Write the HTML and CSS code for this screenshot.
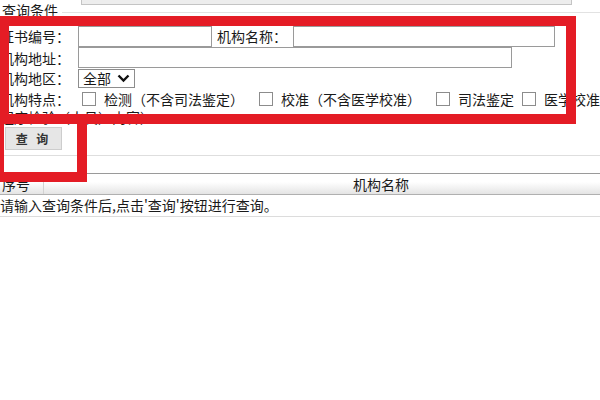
FILE: index.html
```html
<!DOCTYPE html>
<html lang="zh-CN">
<head>
  <meta charset="UTF-8">
  <title>机构查询</title>
  <link rel="stylesheet" href="styles.css">
</head>
<body>
  <div class="page">
    <div class="head">
      <span class="legend">查询条件</span>
      <div class="head-rest">
        <div class="strip"></div>
      </div>
    </div>

    <div class="form">
      <div class="row row-1">
        <label class="lbl">证书编号：</label>
        <input type="text" class="txt txt-code">
        <label class="lbl lbl-2">机构名称：</label>
        <input type="text" class="txt txt-name">
      </div>
      <div class="row row-2">
        <label class="lbl">机构地址：</label>
        <input type="text" class="txt txt-addr">
      </div>
      <div class="row row-3">
        <label class="lbl">机构地区：</label>
        <div class="select">
          <span>全部</span>
          <svg width="13" height="9" viewBox="0 0 13 9"><polyline points="1.5,1.5 6.5,6.5 11.5,1.5" fill="none" stroke="#111" stroke-width="2.4"/></svg>
        </div>
      </div>
      <div class="row row-4">
        <label class="lbl">机构特点：</label>
        <span class="check"><span class="box"></span>检测（不含司法鉴定）</span>
        <span class="check"><span class="box"></span>校准（不含医学校准）</span>
        <span class="check check-short"><span class="box"></span>司法鉴定</span>
        <span class="check"><span class="box"></span>医学校准</span>
      </div>
      <div class="row row-5">
        <span class="more">程序检验（人员）内容）</span>
      </div>
    </div>

    <button class="btn">查 询</button>

    <div class="sep"></div>

    <div class="grid-head">
      <div class="col-no">序号</div>
      <div class="col-name">机构名称</div>
    </div>
    <div class="grid-row">请输入查询条件后,点击'查询'按钮进行查询。</div>

    <!-- annotation marks -->
    <div class="mark mark-form"></div>
    <div class="mark mark-btn"></div>
  </div>
</body>
</html>
```

FILE: styles.css
```css
html, body {
  margin: 0;
  padding: 0;
  overflow: hidden;
  background: #fff;
}

body {
  font-family: "Noto Sans CJK SC", "Liberation Sans", sans-serif;
  font-size: 14px;
  color: #1a1a1a;
}

.page {
  position: relative;
  width: 600px;
  height: 400px;
}

/* legend line */
.head {
  display: flex;
  align-items: flex-start;
  height: 25px;
}

.legend {
  line-height: 18px;
  margin-top: 1px;
  padding-left: 2px;
}

.head-rest {
  flex: 1;
  margin-left: 4px;
  height: 12px;
  border-bottom: 1px solid #e2e2e2;
}

.strip {
  margin-left: 19px;
  width: 489px;
  height: 4px;
  background: #ededed;
  border: 1px solid #c4c4c4;
  border-top: none;
}

/* form */
.row {
  display: flex;
  align-items: center;
  white-space: nowrap;
}

.row-1 { height: 22px; }
.row-2 { height: 21px; }
.row-3 { height: 20px; }
.row-4 { height: 21px; }
.row-5 { height: 16px; align-items: flex-start; }

.lbl {
  width: 78px;
  flex: none;
  line-height: 16px;
}

.lbl-2 {
  width: 76px;
  padding-left: 5px;
}

.txt {
  box-sizing: border-box;
  height: 21px;
  margin: 0;
  padding: 1px 3px;
  border: 1px solid #9a9a9a;
  background: #fff;
  font: inherit;
}

.txt-code { width: 134px; }
.txt-name { width: 262px; }
.txt-addr { width: 434px; }

.select {
  box-sizing: border-box;
  display: flex;
  align-items: center;
  justify-content: space-between;
  width: 57px;
  height: 19px;
  padding: 0 4px 0 4px;
  border: 1px solid #8d8d8d;
  line-height: 17px;
}

.check {
  display: flex;
  align-items: center;
  margin-right: 11px;
}

.check-short {
  margin-right: 4px;
}

.box {
  box-sizing: border-box;
  width: 14px;
  height: 14px;
  margin: 0 8px 0 4px;
  border: 1px solid #8c8c8c;
  background: #fff;
}

.more {
  line-height: 16px;
}

/* button */
.btn {
  display: block;
  box-sizing: border-box;
  width: 57px;
  height: 23px;
  margin: 2px 0 0 5px;
  padding: 0;
  background: #e6e6e6;
  border: 1px solid #cdcdcd;
  font-family: "Noto Sans CJK SC", sans-serif;
  font-size: 12px;
  font-weight: bold;
  letter-spacing: 3px;
  color: #333;
}

.sep {
  margin-top: 5px;
  border-top: 1px solid #dedede;
  height: 17px;
}

/* result grid */
.grid-head {
  display: flex;
  height: 20px;
  border-top: 1px solid #9a9a9a;
  border-bottom: 1px solid #b0b0b0;
  background: linear-gradient(#ffffff, #ffffff 40%, #e4e4e4);
  line-height: 20px;
}

.col-no {
  width: 41px;
  padding-left: 2px;
  border-right: 1px solid #d2d2d2;
}

.col-name {
  padding-left: 309px;
}

.grid-row {
  height: 21px;
  line-height: 20px;
  border-bottom: 1px solid #dcdcdc;
}

/* red annotation rectangles */
.mark {
  position: absolute;
  box-sizing: border-box;
  border: 10px solid #e41c25;
}

.mark-form {
  left: -1px;
  top: 16px;
  width: 577px;
  height: 108px;
}

.mark-btn {
  left: -6px;
  top: 114px;
  width: 93px;
  height: 68px;
}
```
